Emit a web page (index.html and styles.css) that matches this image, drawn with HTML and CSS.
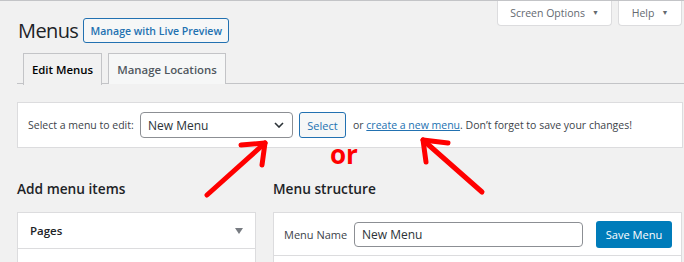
FILE: index.html
```html
<!DOCTYPE html>
<html>
<head>
<meta charset="utf-8">
<link rel="stylesheet" href="styles.css">
</head>
<body>
<div class="screen-meta">
  <button class="meta-btn so">Screen Options <span class="tri">▼</span></button>
  <button class="meta-btn help">Help <span class="tri">▼</span></button>
</div>
<div class="wrap">
  <div class="title-row">
    <h1 class="title">Menus</h1>
    <a class="btn-outline live">Manage with Live Preview</a>
  </div>
  <div class="tabs">
    <a class="tab active">Edit Menus</a>
    <a class="tab">Manage Locations</a>
  </div>
  <div class="manage-panel">
    <span class="lbl">Select a menu to edit:</span>
    <div class="select">
      <span>New Menu</span>
      <svg class="chev" width="10" height="6" viewBox="0 0 10 6"><path d="M1 1 L5 5 L9 1" fill="none" stroke="#2c3338" stroke-width="1.6"/></svg>
    </div>
    <a class="btn-outline sel">Select</a>
    <span class="hint">or <a class="link">create a new menu</a>. Don’t forget to save your changes!</span>
  </div>
  <div class="columns">
    <div class="col-left">
      <h2 class="h2">Add menu items</h2>
      <div class="box">
        <div class="acc-row">
          <span class="acc-title">Pages</span>
          <span class="acc-tri"></span>
        </div>
        <div class="acc-row">
          <span class="acc-title">Posts</span>
        </div>
      </div>
    </div>
    <div class="col-right">
      <h2 class="h2">Menu structure</h2>
      <div class="box">
        <div class="menu-header">
          <span class="mn-lbl">Menu Name</span>
          <div class="mn-input">New Menu</div>
          <a class="btn-primary">Save Menu</a>
        </div>
        <div class="menu-body"></div>
      </div>
    </div>
  </div>
</div>
<div class="or">or</div>
<svg class="arrows" width="684" height="262" viewBox="0 0 684 262">
  <g fill="none" stroke="#ff0000" stroke-width="5" stroke-linecap="round" stroke-linejoin="round">
    <path d="M207 194 L265 142"/>
    <path d="M241 144 L265 142 L262 164"/>
    <path d="M482 191 L423 139"/>
    <path d="M448 142 L423 139 L426 161"/>
  </g>
</svg>
</body>
</html>
```

FILE: styles.css
```css
* { box-sizing: border-box; }
html, body { margin: 0; padding: 0; }
body {
  background: #f1f1f1;
  font-family: "Open Sans", "Noto Sans", sans-serif;
  font-size: 10.5px;
  color: #3c434a;
  width: 684px;
  height: 262px;
  overflow: hidden;
  position: relative;
  border-top: 1px solid #c3c4c7;
  white-space: nowrap;
}
.screen-meta {
  float: right;
  display: flex;
  gap: 6px;
  margin-right: 2px;
  margin-top: -1px;
}
.meta-btn {
  font-family: inherit;
  font-size: 10.5px;
  color: #646970;
  background: #fff;
  border: 1px solid #dcdcde;
  border-top: none;
  border-radius: 0 0 4px 4px;
  height: 26px;
  padding: 0;
  display: flex;
  align-items: center;
  justify-content: center;
  gap: 7px;
  white-space: nowrap;
}
.meta-btn.so { width: 115px; }
.meta-btn.help { width: 64px; }
.tri { font-size: 7px; color: #646970; }
.wrap { padding: 0 0 0 17px; }
.title-row {
  display: flex;
  align-items: center;
  padding-top: 16px;
  height: 43px;
}
.title {
  margin: 0 0 0 1px;
  font-weight: 400;
  font-size: 20px;
  letter-spacing: -0.6px;
  color: #1d2327;
  line-height: 1;
}
.btn-outline {
  display: inline-flex;
  align-items: center;
  justify-content: center;
  border: 1px solid #2271b1;
  border-radius: 3px;
  background: #f6f7f7;
  color: #2271b1;
  white-space: nowrap;
}
.live {
  margin-left: 5px;
  height: 25px;
  width: 146px;
  font-weight: 600;
  font-size: 10.5px;
}
.tabs {
  margin-top: 9px;
  display: flex;
  gap: 6px;
  padding-left: 6px;
  border-bottom: 1px solid #c3c4c7;
  height: 31px;
}
.tab {
  display: flex;
  align-items: center;
  justify-content: center;
  height: 31px;
  border: 1px solid #c3c4c7;
  border-bottom: none;
  background: #f6f7f7;
  color: #50575e;
  font-weight: 600;
  font-size: 11.4px;
}
.tab.active {
  background: #f1f1f1;
  color: #000;
  height: 32px;
  width: 79px;
}
.tab:not(.active) { width: 118px; }
.manage-panel {
  margin-top: 18px;
  height: 46px;
  background: #fff;
  border: 1px solid #dcdcde;
  display: flex;
  align-items: center;
  padding-left: 10px;
  margin-right: 1px;
}
.lbl { width: 112px; }
.select {
  width: 153px;
  height: 26px;
  border: 1px solid #8c8f94;
  border-radius: 4px;
  display: flex;
  align-items: center;
  justify-content: space-between;
  padding: 0 8px 0 7px;
  color: #2c3338;
  font-size: 12px;
}
.sel {
  margin-left: 6px;
  width: 47px;
  height: 26px;
  font-size: 11px;
}
.hint { margin-left: 7px; }
.link { color: #2271b1; text-decoration: underline; }
.columns {
  display: flex;
  gap: 17px;
  margin-top: 31px;
}
.col-left { width: 239px; }
.col-right { flex: 1; margin-right: 2px; }
.h2 {
  margin: 0;
  font-size: 13.7px;
  font-weight: 600;
  color: #1d2327;
  line-height: 20px;
  height: 33px;
}
.box {
  background: #fff;
  border: 1px solid #dcdcde;
}
.acc-row {
  height: 36px;
  display: flex;
  align-items: center;
  justify-content: space-between;
  padding: 0 12px 0 12px;
  border-bottom: 1px solid #dcdcde;
}
.acc-title { font-weight: 600; color: #1d2327; font-size: 11.5px; }
.acc-tri {
  width: 0; height: 0;
  border-left: 4px solid transparent;
  border-right: 4px solid transparent;
  border-top: 6px solid #787c82;
}
.menu-header {
  height: 43px;
  display: flex;
  align-items: center;
  padding: 0 9px 0 10px;
  border-bottom: 1px solid #dcdcde;
}
.mn-lbl { width: 70px; font-size: 11px; color: #3c434a; }
.mn-input {
  width: 229px;
  height: 25px;
  border: 1px solid #8c8f94;
  border-radius: 4px;
  padding-left: 7px;
  display: flex;
  align-items: center;
  color: #2c3338;
  font-size: 12px;
}
.btn-primary {
  margin-left: auto;
  width: 76px;
  height: 27px;
  background: #007cba;
  border-radius: 3px;
  color: #fff;
  font-size: 11.1px;
  display: flex;
  align-items: center;
  justify-content: center;
}
.menu-body { height: 40px; }
.or {
  position: absolute;
  left: 330px;
  top: 138px;
  color: #ff0000;
  font-weight: 700;
  font-size: 26px;
  line-height: 30px;
}
.arrows { position: absolute; left: 0; top: 0; }
```
